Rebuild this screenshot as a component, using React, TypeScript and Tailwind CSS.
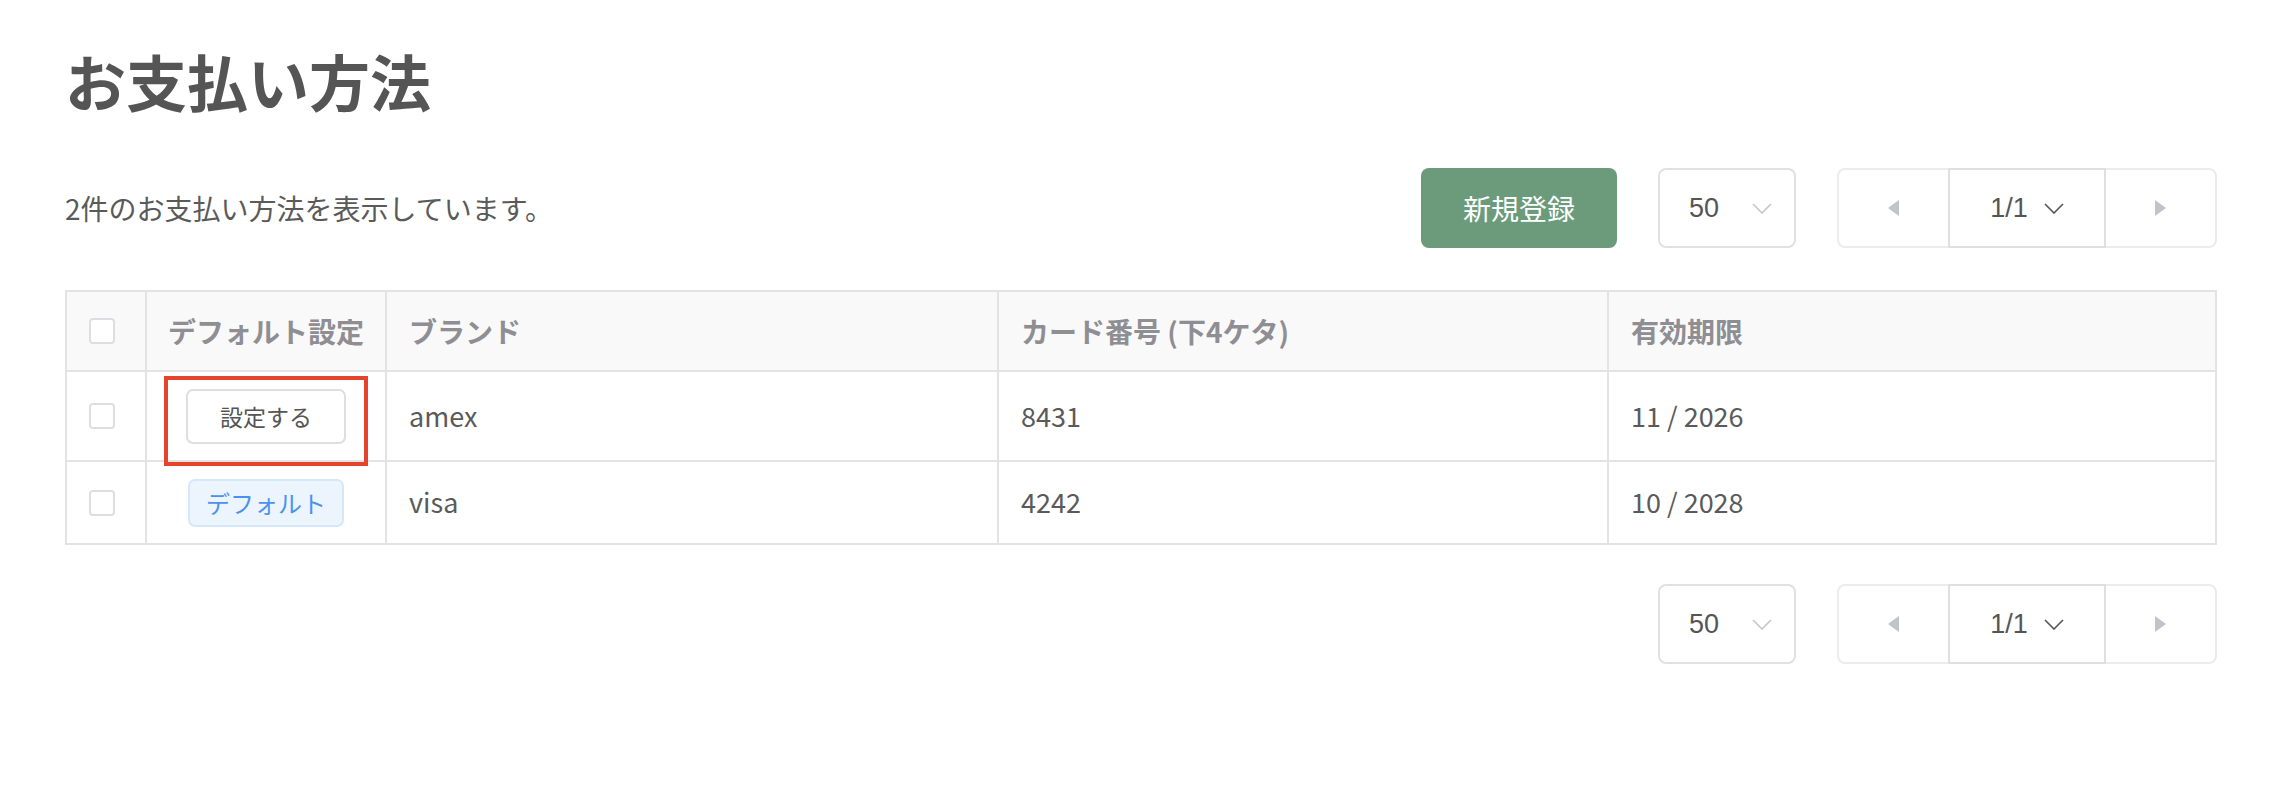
import React from 'react';

const jp = '[font-family:"Noto_Sans_CJK_JP","Noto_Sans",sans-serif]';

interface Card {
  id: string;
  isDefault: boolean;
  brand: string;
  last4: string;
  expiry: string;
}

const cards: Card[] = [
  { id: 'c1', isDefault: false, brand: 'amex', last4: '8431', expiry: '11 / 2026' },
  { id: 'c2', isDefault: true, brand: 'visa', last4: '4242', expiry: '10 / 2028' },
];

function Checkbox() {
  return <div className="w-[26px] h-[26px] rounded-[4px] border-2 border-[#dedee2] bg-white" />;
}

function Chevron({ className }: { className?: string }) {
  return (
    <svg width="20" height="11" viewBox="0 0 20 11" className={className} fill="none">
      <polyline points="1,1 10,10 19,1" stroke="currentColor" strokeWidth="1.6" />
    </svg>
  );
}

function PageControls() {
  return (
    <div className="flex items-center gap-[41px]">
      {/* per page select */}
      <div className="w-[138px] h-[80px] rounded-[8px] border-2 border-[#e0e0e5] flex items-center pl-[29px] pr-[22px] justify-between">
        <span className="text-[27px] text-[#555] [font-family:'Liberation_Sans',sans-serif]">50</span>
        <Chevron className="text-[#c4c4cc]" />
      </div>

      {/* pager */}
      <div className="flex h-[80px] rounded-[8px] border-2 border-[#ececf0]">
        <button className="w-[109px] flex items-center justify-center">
          <svg width="11" height="16" viewBox="0 0 11 16">
            <polygon points="11,0 0,8 11,16" fill="#c2c3ca" />
          </svg>
        </button>
        <div className="w-[158px] -my-[2px] border-2 border-[#dfdfe5] flex items-center justify-center gap-[16px]">
          <span className="text-[27px] text-[#555] [font-family:'Liberation_Sans',sans-serif]">1/1</span>
          <Chevron className="text-[#555]" />
        </div>
        <button className="w-[109px] flex items-center justify-center">
          <svg width="11" height="16" viewBox="0 0 11 16">
            <polygon points="0,0 11,8 0,16" fill="#c2c3ca" />
          </svg>
        </button>
      </div>
    </div>
  );
}

export default function App() {
  return (
    <div className={`min-h-screen bg-white pl-[65px] pr-[59px] pt-[44px] ${jp}`}>
      <h1 className="text-[61px] leading-[74px] font-bold text-[#555]">お支払い方法</h1>

      {/* toolbar */}
      <div className="mt-[50px] h-[80px] flex items-center justify-between">
        <p className="text-[28px] text-[#5a5a5a]">2件のお支払い方法を表示しています。</p>
        <div className="flex items-center gap-[41px]">
          <button className="w-[196px] h-[80px] rounded-[8px] bg-[#6b9b7b] text-white text-[28px]">
            新規登録
          </button>
          <PageControls />
        </div>
      </div>

      {/* table */}
      <table className="mt-[42px] w-full border-collapse table-fixed">
        <colgroup>
          <col className="w-[80px]" />
          <col className="w-[240px]" />
          <col className="w-[612px]" />
          <col className="w-[610px]" />
          <col />
        </colgroup>
        <thead>
          <tr className="h-[80px] bg-[#f9f9f9] text-[28px] font-bold text-[#8e8e93]">
            <th className="border-2 border-[#e3e3e3] pl-[22px] text-left">
              <Checkbox />
            </th>
            <th className="border-2 border-[#e3e3e3] text-center">デフォルト設定</th>
            <th className="border-2 border-[#e3e3e3] pl-[22px] text-left">ブランド</th>
            <th className="border-2 border-[#e3e3e3] pl-[22px] text-left">カード番号 (下4ケタ)</th>
            <th className="border-2 border-[#e3e3e3] pl-[22px] text-left">有効期限</th>
          </tr>
        </thead>
        <tbody className="text-[27px] text-[#5a5a5a]">
          {cards.map((card, i) => (
            <tr key={card.id} className={i === 0 ? 'h-[90px]' : 'h-[83px]'}>
              <td className="border-2 border-[#e3e3e3] pl-[22px]">
                <Checkbox />
              </td>
              <td className="border-2 border-[#e3e3e3] relative">
                {card.isDefault ? (
                  <div className="mx-auto w-[156px] h-[48px] rounded-[7px] bg-[#ecf4fe] border-2 border-[#d6e7fc] text-[#4a92ef] text-[24px] flex items-center justify-center">
                    デフォルト
                  </div>
                ) : (
                  <>
                    <button className="mx-auto w-[160px] h-[55px] rounded-[7px] border-2 border-[#dedee3] bg-white text-[#555] text-[23px] flex items-center justify-center">
                      設定する
                    </button>
                    {/* annotation */}
                    <div className="absolute left-[17px] top-[4px] w-[204px] h-[90px] border-[4px] border-[#e5432b] pointer-events-none" />
                  </>
                )}
              </td>
              <td className="border-2 border-[#e3e3e3] pl-[22px]">{card.brand}</td>
              <td className="border-2 border-[#e3e3e3] pl-[22px]">{card.last4}</td>
              <td className="border-2 border-[#e3e3e3] pl-[22px]">{card.expiry}</td>
            </tr>
          ))}
        </tbody>
      </table>

      <div className="mt-[39px] flex justify-end">
        <PageControls />
      </div>
    </div>
  );
}
